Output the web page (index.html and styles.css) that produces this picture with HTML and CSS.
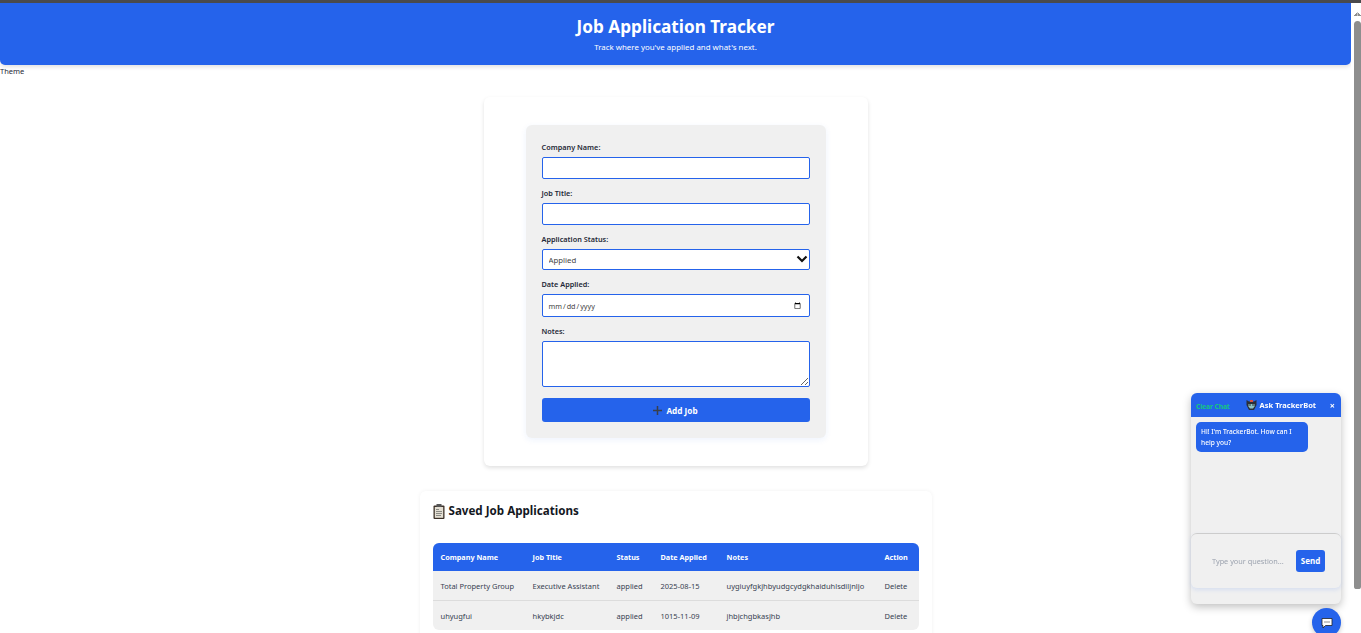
FILE: index.html
```html
<!DOCTYPE html>
<html lang="en">
<head>
    <meta charset="UTF-8">
    <meta name="viewport" content="width=device-width, initial-scale=1.0">
    <title>Job Application Tracker</title>
    <link rel="stylesheet" href="styles.css">
</head>
<body>
    <div class="top-strip"></div>
    <div class="window">
        <div class="page">
            <header class="site-header">
                <h1>Job Application Tracker</h1>
                <p>Track where you've applied and what's next.</p>
            </header>
            <div class="theme-label">Theme</div>

            <main>
                <section class="form-card">
                    <form class="job-form">
                        <label for="company">Company Name:</label>
                        <input type="text" id="company">

                        <label for="title">Job Title:</label>
                        <input type="text" id="title">

                        <label for="status">Application Status:</label>
                        <div class="select-wrap">
                            <select id="status">
                                <option>Applied</option>
                                <option>Interview</option>
                                <option>Offer</option>
                                <option>Rejected</option>
                            </select>
                            <svg class="select-arrow" viewBox="0 0 12 8" width="12" height="8"><path d="M1.500 1.500 6 6l4.500-4.500" fill="none" stroke="#111" stroke-width="2.200"/></svg>
                        </div>

                        <label for="date">Date Applied:</label>
                        <input type="date" id="date">

                        <label for="notes">Notes:</label>
                        <textarea id="notes"></textarea>

                        <button type="button" class="add-btn">
                            <svg viewBox="0 0 9 9" width="9" height="9"><path d="M4.500 0v9M0 4.500h9" stroke="#3a3f4a" stroke-width="1.500"/></svg>
                            Add Job
                        </button>
                    </form>
                </section>

                <section class="jobs-card">
                    <h2>
                        <svg viewBox="0 0 12 15" width="12" height="15">
                            <rect x="0.500" y="1.500" width="11" height="13.500" rx="1" fill="#3b3027"/>
                            <rect x="1.800" y="3" width="8.400" height="10.800" fill="#e4dfd3"/>
                            <rect x="3.500" y="0" width="5" height="3" fill="#555"/>
                            <path d="M3 5.500h3M3 7.500h6M3 9.500h6M3 11.500h5" stroke="#8a8a84" stroke-width="1"/>
                        </svg>
                        Saved Job Applications
                    </h2>
                    <table class="jobs-table">
                        <thead>
                            <tr>
                                <th class="col-company">Company Name</th>
                                <th class="col-title">Job Title</th>
                                <th class="col-status">Status</th>
                                <th class="col-date">Date Applied</th>
                                <th class="col-notes">Notes</th>
                                <th>Action</th>
                            </tr>
                        </thead>
                        <tbody>
                            <tr>
                                <td>Total Property Group</td>
                                <td>Executive Assistant</td>
                                <td>applied</td>
                                <td>2025-08-15</td>
                                <td>uygiuyfgkjhbyudgcydgkhaiduhlsdiljnljo</td>
                                <td>Delete</td>
                            </tr>
                            <tr>
                                <td>uhyugfui</td>
                                <td>hkybkjdc</td>
                                <td>applied</td>
                                <td>1015-11-09</td>
                                <td>jhbjchgbkasjhb</td>
                                <td>Delete</td>
                            </tr>
                        </tbody>
                    </table>
                </section>
            </main>
        </div>
        <div class="scrollbar">
            <div class="scroll-arrow"></div>
            <div class="scroll-thumb"></div>
        </div>
    </div>

    <aside class="chat-box">
        <div class="chat-head">
            <span class="clear-chat">Clear Chat</span>
            <span class="chat-title">
                <svg viewBox="0 0 11 12" width="11" height="12">
                    <path d="M0.500 1 3 2.500h5L10.500 1v5L8 11H3L0.500 6z" fill="#2a2f38"/>
                    <rect x="4" y="1" width="3" height="2" fill="#d9503f"/>
                    <path d="M2.500 5h6v2.500L7 9.500H4L2.500 7.500z" fill="#8fc4c4"/>
                    <circle cx="4" cy="6" r="0.800" fill="#222"/>
                    <circle cx="7" cy="6" r="0.800" fill="#222"/>
                </svg>
                Ask TrackerBot
            </span>
            <span class="chat-close">×</span>
        </div>
        <div class="chat-body">
            <div class="bot-msg">Hi! I'm TrackerBot. How can I help you?</div>
        </div>
        <div class="chat-input">
            <input type="text" placeholder="Type your question...">
            <button type="button">Send</button>
        </div>
    </aside>
    <button type="button" class="chat-toggle">
        <svg viewBox="0 0 12 12" width="12" height="12"><path d="M1 1.500h10v7H4.500L2 11V8.500H1z" fill="#fff" stroke="#222" stroke-width="0.800"/><path d="M3.500 5h1M5.500 5h1M7.500 5h1" stroke="#222" stroke-width="1.200"/></svg>
    </button>
</body>
</html>
```

FILE: styles.css
```css
* {
    box-sizing: border-box;
}
html, body {
    height: 100%;
    margin: 0;
    overflow: hidden;
}
body {
    display: flex;
    flex-direction: column;
    font-family: "Noto Sans", Arial, sans-serif;
    color: #1f2937;
    background: #fff;
}
.top-strip {
    height: 3px;
    flex: none;
    background: #4a4a4c;
}
.window {
    flex: 1;
    min-height: 0;
    display: flex;
}
.page {
    flex: 1;
    min-width: 0;
    overflow: hidden;
}
.scrollbar {
    flex: none;
    width: 10px;
    padding-left: 3px;
    display: flex;
    flex-direction: column;
    background: #fff;
}
.scroll-arrow {
    height: 18px;
    background: linear-gradient(to top right, transparent 50%, #8e8e8e 50%) 0 5px / 3.500px 4px no-repeat,
        linear-gradient(to top left, transparent 50%, #8e8e8e 50%) 3.500px 5px / 3.500px 4px no-repeat;
    transform: scaleY(-1);
}
.scroll-thumb {
    height: 568px;
    background: #8e8e8e;
    border-radius: 4px 4px 3px 3px;
}

.site-header {
    background: #2563eb;
    color: #fff;
    text-align: center;
    height: 62px;
    padding-top: 12px;
    border-radius: 0 0 5px 5px;
    box-shadow: 0 2px 4px rgba(0, 0, 0, 0.12);
}
.site-header h1 {
    margin: 0;
    font-size: 17.200px;
    line-height: 24px;
    font-weight: 700;
}
.site-header p {
    margin: 1px 0 0;
    font-size: 7.900px;
    line-height: 14px;
}
.theme-label {
    font-size: 7.500px;
    line-height: 12px;
}

main {
    display: flex;
    flex-direction: column;
    align-items: center;
}
.form-card {
    width: 384px;
    height: 369px;
    margin-top: 20px;
    padding: 28px 42px 0;
    background: #fff;
    border-radius: 6px;
    box-shadow: 0 2px 4px rgba(0, 0, 0, 0.12);
}
.job-form {
    display: flex;
    flex-direction: column;
    height: 313px;
    padding: 16px 16px 0;
    background: #f0f0f0;
    border-radius: 6px;
    box-shadow: 0 2px 6px rgba(37, 99, 235, 0.08);
}
.job-form label {
    font-size: 7.300px;
    line-height: 12px;
    font-weight: 600;
    color: #1f2937;
    margin-bottom: 4px;
}
.job-form input,
.job-form select,
.job-form textarea {
    display: block;
    width: 100%;
    background: #fff;
    border: 1px solid #2563eb;
    border-radius: 2px;
    font-family: inherit;
    color: #444;
    outline: none;
}
.job-form input[type="text"] {
    height: 22px;
    margin-bottom: 8px;
}
.job-form input[type="date"] {
    height: 23px;
    margin-bottom: 8px;
    padding: 0 5px;
    font-size: 7.200px;
}
.select-wrap {
    position: relative;
    margin-bottom: 8px;
}
.job-form select {
    height: 21px;
    padding: 0 6px;
    font-size: 7.800px;
    appearance: none;
}
.select-arrow {
    position: absolute;
    right: 2px;
    top: 6px;
}
.job-form textarea {
    height: 46px;
    margin-bottom: 11px;
}
.add-btn {
    display: flex;
    align-items: center;
    justify-content: center;
    gap: 4px;
    height: 24px;
    padding-bottom: 1px;
    border: 0;
    border-radius: 3px;
    background: #2563eb;
    color: #fff;
    font-family: inherit;
    font-size: 8.200px;
    font-weight: 700;
}

.jobs-card {
    width: 512px;
    margin-top: 25px;
    padding: 12px 13px 30px;
    background: #fff;
    border-radius: 6px;
    box-shadow: 0 0 4px rgba(0, 0, 0, 0.06);
}
.jobs-card h2 {
    display: flex;
    align-items: center;
    gap: 4px;
    margin: 0 0 24px;
    font-size: 11.600px;
    line-height: 16px;
    font-weight: 700;
    color: #14181f;
}
.jobs-table {
    width: 100%;
    border-collapse: separate;
    border-spacing: 0;
    border-radius: 6px;
    overflow: hidden;
    background: #f0f0f0;
    font-size: 7.500px;
    text-align: left;
}
.jobs-table th {
    height: 28px;
    padding: 0 0 0 8px;
    background: #2563eb;
    color: #fff;
    font-size: 7.250px;
    font-weight: 700;
}
.jobs-table td {
    height: 29px;
    padding: 0 0 0 8px;
    color: #374151;
    white-space: nowrap;
}
.jobs-table tbody tr:first-child td {
    height: 30px;
    border-bottom: 1px solid #dcdcdc;
}
.col-company {
    width: 92px;
}
.col-title {
    width: 84px;
}
.col-status {
    width: 44px;
}
.col-date {
    width: 66px;
}
.col-notes {
    width: 158px;
}

.chat-box {
    position: fixed;
    right: 20px;
    bottom: 29px;
    width: 150px;
    height: 211px;
    display: flex;
    flex-direction: column;
    background: #f0f0f0;
    border-radius: 6px;
    box-shadow: 0 3px 8px rgba(0, 0, 0, 0.25);
}
.chat-head {
    display: flex;
    align-items: center;
    height: 24px;
    padding: 0 5px;
    background: #2563eb;
    color: #fff;
    border-radius: 6px 6px 0 0;
    font-size: 7.500px;
    font-weight: 700;
}
.clear-chat {
    color: #14c77f;
    font-size: 6.500px;
    margin-top: 2px;
}
.chat-title {
    display: flex;
    align-items: center;
    gap: 3px;
    margin-left: 16px;
}
.chat-close {
    margin-left: auto;
    padding-right: 1px;
    font-size: 9px;
}
.chat-body {
    flex: 1;
    padding: 5px;
}
.bot-msg {
    width: 112px;
    padding: 4px 5px;
    background: #2563eb;
    color: #fff;
    border-radius: 5px;
    font-size: 6.600px;
    line-height: 11px;
    font-weight: 500;
}
.chat-input {
    display: flex;
    align-items: center;
    height: 55px;
    margin-bottom: 16px;
    padding: 0 16px 0 21px;
    border-top: 1px solid #ccc;
    border-radius: 6px;
    box-shadow: 0 2px 4px rgba(37, 99, 235, 0.12);
}
.chat-input input {
    flex: 1;
    min-width: 0;
    border: 0;
    padding: 0;
    background: transparent;
    font-family: inherit;
    font-size: 7.300px;
    outline: none;
}
.chat-input input::placeholder {
    color: #9ca3af;
}
.chat-input button {
    width: 29px;
    height: 22px;
    padding: 0 0 1px;
    border: 0;
    border-radius: 3px;
    background: #2563eb;
    color: #fff;
    font-family: inherit;
    font-size: 8px;
    font-weight: 700;
}
.chat-toggle {
    position: fixed;
    right: 20px;
    bottom: -4px;
    display: flex;
    align-items: center;
    justify-content: center;
    width: 29px;
    height: 29px;
    padding: 0;
    border: 0;
    border-radius: 50%;
    background: #2563eb;
    box-shadow: 0 2px 5px rgba(0, 0, 0, 0.2);
}
```
